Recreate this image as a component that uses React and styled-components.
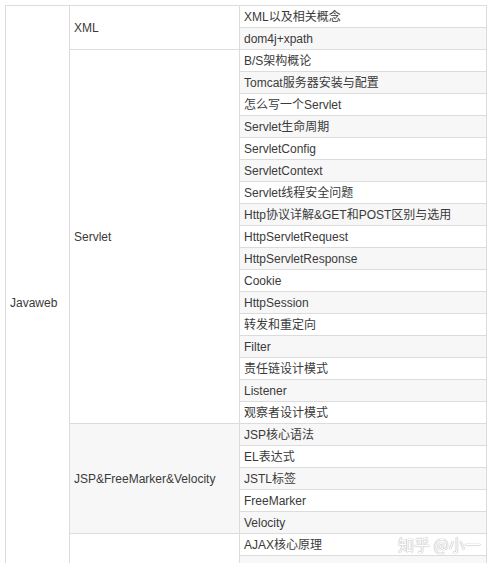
import React from 'react';
import styled, { createGlobalStyle } from 'styled-components';

const GlobalStyle = createGlobalStyle`
  html, body {
    margin: 0;
    padding: 0;
    background: #fff;
  }
  body {
    font-family: "Liberation Sans", Arial, "Noto Sans CJK SC", sans-serif;
  }
`;

const Page = styled.div`
  position: relative;
  width: 488px;
  height: 563px;
  overflow: hidden;
  padding: 5px 0 0 5px;
  box-sizing: border-box;
`;

const Table = styled.table`
  width: 481px;
  border-collapse: collapse;
  table-layout: fixed;
  font-size: 12px;
  color: #3a3a3a;
`;

const Col = styled.col`
  width: ${({ $w }) => `${$w}px`};
`;

const Row = styled.tr`
  height: 22px;
  background: ${({ $even }) => ($even ? '#f7f7f7' : '#fff')};
`;

const Cell = styled.td`
  border: 1px solid #dcdcdc;
  padding: 0 4px;
  height: 21px;
  line-height: 20px;
  vertical-align: middle;
  white-space: nowrap;
  overflow: hidden;
`;

const Watermark = styled.div`
  position: absolute;
  left: 398px;
  top: 532px;
  white-space: nowrap;
  font-family: "Noto Sans CJK SC", sans-serif;
  font-size: 16px;
  color: #fff;
  text-shadow: 0 0 1px #a8a8a8, 0 0 1px #a8a8a8;
`;

const groups = [
  { name: 'XML', items: ['XML以及相关概念', 'dom4j+xpath'] },
  {
    name: 'Servlet',
    items: [
      'B/S架构概论',
      'Tomcat服务器安装与配置',
      '怎么写一个Servlet',
      'Servlet生命周期',
      'ServletConfig',
      'ServletContext',
      'Servlet线程安全问题',
      'Http协议详解&GET和POST区别与选用',
      'HttpServletRequest',
      'HttpServletResponse',
      'Cookie',
      'HttpSession',
      '转发和重定向',
      'Filter',
      '责任链设计模式',
      'Listener',
      '观察者设计模式',
    ],
  },
  {
    name: 'JSP&FreeMarker&Velocity',
    items: ['JSP核心语法', 'EL表达式', 'JSTL标签', 'FreeMarker', 'Velocity'],
  },
  { name: '', items: ['AJAX核心原理', '\u00a0', '\u00a0'] },
];

const total = groups.reduce((n, g) => n + g.items.length, 0);

const App = () => {
  let index = 0;
  const rows = [];
  groups.forEach((group) => {
    group.items.forEach((item, i) => {
      index += 1;
      rows.push(
        <Row key={index} $even={index % 2 === 0}>
          {index === 1 && <Cell rowSpan={total}>Javaweb</Cell>}
          {i === 0 && <Cell rowSpan={group.items.length}>{group.name}</Cell>}
          <Cell>{item}</Cell>
        </Row>
      );
    });
  });

  return (
    <Page>
      <GlobalStyle />
      <Table>
        <colgroup>
          <Col $w={64} />
          <Col $w={170} />
          <Col $w={247} />
        </colgroup>
        <tbody>{rows}</tbody>
      </Table>
      <Watermark>知乎 @小一</Watermark>
    </Page>
  );
};

export default App;
